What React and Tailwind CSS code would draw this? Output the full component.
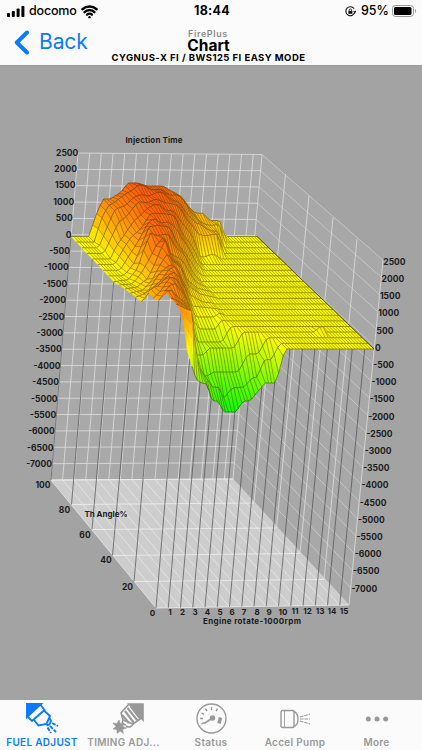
import { Wifi } from "lucide-react";

// Surface outline for every 5% of throttle, 100% first: [x, y] on the canvas.
// Anything past the last point stays at zero.
const RIDGES = [
  [[71, 236.5], [89, 236], [96, 215], [103, 199], [110, 199], [120, 193], [128, 183], [137, 183], [147, 186], [163, 186], [173, 192], [182, 197], [188, 206], [195, 213], [203, 213.3], [210, 220.5], [219.5, 220.5], [225, 236.5]],
  [[76, 242], [94, 242], [101, 221], [108, 205], [117, 201], [127, 191], [138, 187], [162, 190], [176, 195], [186, 205], [194, 215], [200, 222], [219, 226], [225, 242]],
  [[82, 248], [99, 247], [106, 229], [114, 213], [122, 208], [132, 198], [142, 194], [165, 195], [178, 202], [188, 213], [196, 225], [218, 232], [224, 248]],
  [[87, 253], [104, 253], [112, 236], [119, 221], [130, 213], [140, 203], [155, 199], [168, 202], [182, 212], [190, 222], [198, 234], [217, 236], [224, 253]],
  [[92, 259], [110, 259], [118, 243], [126, 231], [136, 219], [146, 209], [160, 206], [172, 210], [184, 224], [192, 238], [201, 258], [213, 254], [222, 259]],
  [[98, 264], [115, 264], [123, 250], [132, 238], [142, 225], [150, 214], [163, 213], [175, 219], [185, 235], [195, 252], [201, 264]],
  [[103, 270], [120, 270], [129, 256], [137, 243], [146, 228], [154, 219], [167, 221], [178, 231], [186, 246], [197, 263], [203, 270]],
  [[108.5, 275.5], [125, 275], [134, 262], [141, 246], [149, 228], [158, 225], [170, 230], [180, 244], [188, 258], [198, 272], [203, 276]],
  [[114, 281], [128, 280], [138, 268], [144, 250], [151, 232], [158, 233], [168, 236], [176, 247], [184, 256], [192, 270], [200, 281]],
  [[119, 285], [132, 284], [142, 273], [149, 260], [156, 246], [164, 238], [170, 250], [178, 256], [186, 268], [196, 282], [206, 287]],
  [[125, 289], [137, 287], [147, 278], [156, 261], [165, 242], [172, 258], [180, 265], [187, 278], [197, 288], [212, 292]],
  [[131, 293], [142, 291], [152, 280], [160, 265], [168, 251], [174, 262], [182, 272], [188, 285], [200, 294], [217, 298]],
  [[136, 297], [148, 291], [157, 279], [165, 268], [171, 263], [178, 272], [185, 283], [190, 295], [203, 302], [221, 304]],
  [[141, 302], [152, 289], [160, 280], [168, 270], [175, 269], [182, 279], [188, 297], [192, 306], [220, 309]],
  [[147, 294], [157, 287], [165, 277], [173, 272], [180, 277], [186, 290], [191, 307], [196, 317], [213, 317], [220, 313], [224, 315]],
  [[153, 298], [162, 289], [170, 280], [178, 280], [184, 290], [189, 305], [194, 322], [200, 329], [215, 329], [222, 320]],
  [[160, 298], [168, 287], [175, 283], [182, 292], [188, 305], [192, 322], [197, 342], [222, 342], [231, 326.5]],
  [[167, 293], [172, 290], [179, 295], [185, 303], [190, 315], [193, 335], [197, 355], [203, 355], [210, 348], [234, 348], [243, 332], [314, 332], [322, 325], [326, 332]],
  [[172, 298], [178, 301], [184, 305], [190, 312], [193, 340], [198, 364], [205, 377], [214, 372], [238, 372], [248, 354], [258, 354], [267, 338]],
  [[177, 304], [184, 308], [192, 311], [195, 345], [200, 372], [206, 377], [212, 387], [218, 387], [224, 398], [232, 388], [244, 387], [252, 378], [257, 377], [265, 359], [271, 360], [280, 343.4]],
  [[182, 311], [185, 330], [187, 350], [191, 363], [196, 379], [201, 383], [207, 384], [212, 401], [218, 401], [224, 412], [236, 412], [243, 401], [250, 401], [265, 383], [276, 383], [285, 349]],
];

const TILT = 0.085;
const COLS = 63;

const rowLeft = (k) => 71 + 5.35 * k;
const rowWidth = (k) => 186 + 0.5 * k;
const rowY = (k) => 236.5 + 5.625 * k;

// small steps between neighbouring cells of the map, only on the hill
function roughness(i, k, h) {
  if (k === 0 || k > 17 || h < 6) return 0;
  return (Math.sin(i * 0.9 + k * 2.3) + Math.sin(i * 0.45 - k * 1.7)) * 1.3 * Math.min(1, h / 28);
}

const surface = RIDGES.map((points, k) => {
  const base = points.map(([x, y]) => {
    const h = rowY(k) - y;
    return [x - TILT * h, h];
  });
  return Array.from({ length: COLS + 1 }, (_, i) => {
    const x = rowLeft(k) + (rowWidth(k) * i) / COLS;
    let h = 0;
    if (x <= base[0][0]) h = base[0][1];
    else {
      const j = base.findIndex((p) => p[0] >= x);
      if (j > 0) {
        const [x0, h0] = base[j - 1];
        const [x1, h1] = base[j];
        h = h0 + ((h1 - h0) * (x - x0)) / (x1 - x0 || 1);
      }
    }
    h += roughness(i, k, h);
    if (Math.abs(h) < 0.8) h = 0;
    return { x: x + TILT * h, y: rowY(k) - h, h };
  });
});

function heatColor(h) {
  if (h >= 0) {
    const t = Math.min(h / 56, 1) ** 0.88;
    return `rgb(255,${Math.round(252 - 164 * t)},${Math.round(12 * t)})`;
  }
  const t = Math.min(-h / 60, 1);
  return `rgb(${Math.round(255 - 232 * t)},252,0)`;
}

const mix = (a, b, t) => ({
  x: a.x + (b.x - a.x) * t,
  y: a.y + (b.y - a.y) * t,
  h: a.h + (b.h - a.h) * t,
});
const pts = (list) => list.map((p) => `${p.x.toFixed(1)},${p.y.toFixed(1)}`).join(" ");

function Surface() {
  const cells = [];
  for (let k = 0; k < 20; k++) {
    for (let i = COLS - 1; i >= 0; i--) {
      const a = surface[k][i];
      const b = surface[k][i + 1];
      const c = surface[k + 1][i + 1];
      const d = surface[k + 1][i];
      const parts = Math.abs(a.h - d.h) > 8 ? 4 : 1;
      for (let s = 0; s < parts; s++) {
        const quad = [mix(a, d, s / parts), mix(b, c, s / parts), mix(b, c, (s + 1) / parts), mix(a, d, (s + 1) / parts)];
        const color = heatColor(quad.reduce((sum, p) => sum + p.h, 0) / 4);
        cells.push(<polygon key={`${k}-${i}-${s}`} points={pts(quad)} fill={color} stroke={color} strokeWidth="0.4" />);
      }
      cells.push(<polyline key={`${k}-${i}-r`} points={pts([a, b])} fill="none" stroke="#2b2600" strokeWidth="0.6" strokeOpacity="0.8" />);
      if (!(k === 19 && i < 5)) {
        cells.push(<polyline key={`${k}-${i}-c`} points={pts([b, c])} fill="none" stroke="#2b2600" strokeWidth="0.55" strokeOpacity="0.65" />);
      }
    }
  }
  return (
    <g>
      {cells}
      <polyline points={pts(surface[20].slice(5))} fill="none" stroke="#2b2600" strokeWidth="0.6" strokeOpacity="0.8" />
      <polyline points={pts(surface.map((row) => row[COLS]))} fill="none" stroke="#2b2600" strokeWidth="0.7" />
    </g>
  );
}

const range = (n) => Array.from({ length: n }, (_, i) => i);
const lerp = (a, b, t) => a + (b - a) * t;

const SIDE_TOP = [[262, 154.5], [285.5, 174], [309, 196], [333, 217.5], [357, 239], [383, 260]];
const SIDE_BOTTOM = [[233, 479], [254, 503], [276.5, 528], [300, 553.5], [324, 579.5], [349, 605]];
const FLOOR_LEFT = [[51, 480], [71.5, 504.5], [92, 529.5], [112.5, 555.5], [134, 581.5], [156, 608]];

function Grid() {
  return (
    <g>
      <polygon points="78,153 262,154.5 233,479 51,480" fill="#a9a9a9" />
      <polygon points="262,154.5 383,260 349,605 233,479" fill="#a8a8a8" />
      <polygon points="51,480 233,479 349,605 156,608" fill="#cdcdcd" />
      <g stroke="#dedede" strokeWidth="0.9" strokeOpacity="0.9">
        {range(21).map((i) => {
          const t = i / 20;
          const bx = lerp(262, 233, t);
          const by = lerp(154.5, 479, t);
          return (
            <g key={i}>
              <line x1={lerp(78, 51, t)} y1={lerp(153, 480, t)} x2={bx} y2={by} />
              <line x1={bx} y1={by} x2={lerp(383, 349, t)} y2={lerp(260, 605, t)} strokeOpacity="0.6" />
            </g>
          );
        })}
        {range(16).map((i) => {
          const t = i / 15.75;
          return (
            <g key={i}>
              <line x1={78 + 184 * t} y1={153 + 1.5 * t} x2={51 + 182 * t} y2={480 - t} />
              <line x1={51 + 182 * t} y1={480 - t} x2={156 + 193 * t} y2={608 - 3 * t} stroke="#e8e8e8" />
            </g>
          );
        })}
        {SIDE_TOP.map(([x, y], i) => (
          <line key={i} x1={x} y1={y} x2={SIDE_BOTTOM[i][0]} y2={SIDE_BOTTOM[i][1]} />
        ))}
        {FLOOR_LEFT.map(([x, y], i) => (
          <line key={i} x1={x} y1={y} x2={SIDE_BOTTOM[i][0]} y2={SIDE_BOTTOM[i][1]} stroke="#f0f0f0" />
        ))}
      </g>
      <g stroke="#4a4a4a" strokeWidth="0.8" strokeOpacity="0.85">
        {FLOOR_LEFT.slice(0, 5).map(([x, y], i) => (
          <line key={i} x1={surface[i * 4][0].x} y1={surface[i * 4][0].y} x2={x} y2={y} />
        ))}
        {range(16).map((i) => {
          const top = surface[20][i * 4];
          return <line key={i} x1={top.x} y1={top.y} x2={156 + 12.25 * i} y2={608 - 0.19 * i} />;
        })}
      </g>
    </g>
  );
}

const RPM_X = [152.5, 170, 182.5, 195, 207.5, 220, 232, 244, 257, 269, 283, 295, 307.5, 320, 332, 344];
const ANGLES = [["100", 43, 485], ["80", 64.5, 509.5], ["60", 85, 534.5], ["40", 106, 560], ["20", 127.5, 586.5]];

function AxisLabels() {
  return (
    <g fill="#1c1c1c" fontSize="8.5" fontWeight="650" dominantBaseline="central">
      <text x="154" y="140" textAnchor="middle" fontSize="8" textLength="57">Injection Time</text>
      {range(20).map((i) => {
        const value = 2500 - i * 500;
        return (
          <g key={i}>
            <text x={78.3 - 1.38 * i} y={152.5 + 16.4 * i} textAnchor="end">{value}</text>
            <text x={383.3 - 1.68 * i} y={261.8 + 17.2 * i}>{value}</text>
          </g>
        );
      })}
      {ANGLES.map(([label, x, y]) => (
        <text key={label} x={x} y={y} textAnchor="middle">{label}</text>
      ))}
      {RPM_X.map((x, i) => (
        <text key={i} x={x} y={612.5 - i * 0.1} fontSize="8" textAnchor="middle">{i}</text>
      ))}
      <text x="84.5" y="514" fontSize="8" textLength="43">Th Angle%</text>
      <text x="203" y="620.7" fontSize="8" textLength="98">Engine rotate-1000rpm</text>
    </g>
  );
}

function StatusBar() {
  return (
    <div className="grid h-[22px] grid-cols-3 items-center pl-[7px] pr-[5px] text-black">
      <div className="flex items-center">
        <svg width="18" height="11" viewBox="0 0 18 11">
          <rect x="0" y="7" width="3" height="4" rx="0.8" />
          <rect x="4.8" y="5" width="3" height="6" rx="0.8" />
          <rect x="9.6" y="2.5" width="3" height="8.5" rx="0.8" />
          <rect x="14.4" y="0" width="3" height="11" rx="0.8" />
        </svg>
        <span className="ml-1 text-[12.5px] font-medium tracking-[-0.2px]">docomo</span>
        <Wifi className="ml-[4px] h-[17px] w-[17px]" strokeWidth={3.4} />
      </div>
      <div className="text-center text-[12.5px] font-bold tracking-[0.3px]">18:44</div>
      <div className="flex items-center justify-end">
        <svg width="11" height="11" viewBox="0 0 11 11" fill="none" stroke="#111" strokeWidth="1.1">
          <path d="M9.1 2.6A4.5 4.5 0 1 0 9.8 6.2M8.6 5.2l1.3 1.3 1-1.6" />
          <rect x="3.4" y="5" width="4" height="2.8" fill="#111" stroke="none" />
          <path d="M4.2 5V4.2a1.2 1.2 0 0 1 2.4 0V5" strokeWidth="0.9" />
        </svg>
        <span className="ml-[5px] text-[12.5px] font-medium">95%</span>
        <svg className="ml-[3px]" width="25" height="12" viewBox="0 0 25 12">
          <rect x="0.5" y="0.5" width="21" height="11" rx="3" fill="none" stroke="#999" />
          <rect x="2" y="2" width="17.5" height="8" rx="1.6" />
          <path d="M23 4v4c1.6-.6 1.6-3.4 0-4z" fill="#999" />
        </svg>
      </div>
    </div>
  );
}

function NavBar() {
  return (
    <div className="grid h-[43px] grid-cols-[110px_1fr_110px]">
      <div className="flex items-center pb-[3px] pl-[14px] text-[#0a7aff]">
        <svg width="16" height="25" viewBox="0 0 16 25" fill="none" stroke="currentColor" strokeWidth="4" strokeLinecap="round" strokeLinejoin="round">
          <path d="M13 2.5 2.8 12.5 13 22.5" />
        </svg>
        <span className="ml-[9px] text-[21px] tracking-[-0.1px]">Back</span>
      </div>
      <div className="flex flex-col items-center whitespace-nowrap pt-[6px] text-black">
        <span className="mr-[6px] text-[9px] font-semibold leading-[11px] tracking-[0.6px] text-[#8b8b8e]">FirePlus</span>
        <span className="mr-[5px] text-[15.5px] font-bold leading-[13px]">Chart</span>
        <span className="mr-[5px] text-[9.5px] font-bold leading-[12px] tracking-[0.45px]">CYGNUS-X FI / BWS125 FI EASY MODE</span>
      </div>
    </div>
  );
}

function InjectorIcon() {
  return (
    <svg width="33" height="32" viewBox="0 0 33 32" fill="none" stroke="currentColor" strokeWidth="1.9">
      <path d="M1 1h14L1 14z" fill="currentColor" />
      <path d="M1 13 6 18 18.5 7 14 1M8 17l4.500 5.500 8-1.500 3.500-8-5.500-5" />
      <path d="M20.5 22.5l3-1.2 1.5-3.4-1.5-2.7" />
      <path d="M26 20l6 3M24 23l6 6M21.500 24.500l3.500 5.500" strokeDasharray="4 1.200" />
    </svg>
  );
}

function SparkPlugIcon() {
  return (
    <svg className="ml-[9px]" width="32" height="32" viewBox="0 0 32 32" fill="none" stroke="currentColor" strokeWidth="1.6">
      <path d="M17 1h14v16L20 4z" fill="currentColor" />
      <path d="M17 1 9 10l2 7 10 4 10-7" />
      <path d="M13 8l9 12M15.500 5l10 12.500M18.500 3l9.500 12.500M10 12l7 8" strokeWidth="2.100" />
      <path d="M11 17c-2 4 1 5 3 4.500M21 21c-1 3-4 4-7 2" />
      <path d="M1 20l4 .5L7 17l1.500 4 3.500-1-1.500 3.500 4 1.500-4 1.500 1 4-3.500-2.500-3 2.500v-4l-4-.5L4 23.500z" fill="currentColor" strokeWidth="0.600" />
    </svg>
  );
}

function GaugeIcon() {
  return (
    <svg width="31" height="31" viewBox="0 0 31 31" fill="none" stroke="currentColor" strokeWidth="1.4">
      <circle cx="15.5" cy="15.5" r="14.5" />
      <path d="M15.5 4v3M9.5 5.700l1.400 2.500M5.500 10l2.500 1.400M4 15.500h3M21.500 5.700l-1.400 2.500M5.500 21l2.500-1.400" />
      <path d="M24.500 14.500l-1.500 6" strokeWidth="3.5" />
      <path d="M8 20.500l8-5" strokeWidth="1.7" />
      <circle cx="16.5" cy="15" r="2" fill="currentColor" />
    </svg>
  );
}

function PumpIcon() {
  return (
    <svg width="31" height="20" viewBox="0 0 31 20" fill="none" stroke="currentColor" strokeWidth="1.4">
      <rect x="1" y="1.5" width="13" height="17" rx="1.5" />
      <path d="M4.500 2v16" strokeWidth="0.9" />
      <path d="M14 2.500c2.500 1 4 4 4 7.500s-1.500 6.500-4 7.500" />
      <path d="M20 8l10-3M20 10h10M20 12l10 3" strokeWidth="1.1" strokeDasharray="3.5 1" />
    </svg>
  );
}

function MoreIcon() {
  return (
    <svg width="24" height="6" viewBox="0 0 24 6" fill="currentColor">
      <circle cx="3.3" cy="3" r="2.5" />
      <circle cx="12" cy="3" r="2.5" />
      <circle cx="20.7" cy="3" r="2.5" />
    </svg>
  );
}

const TABS = [
  { label: "FUEL ADJUST", icon: InjectorIcon, active: true },
  { label: "TIMING ADJ...", icon: SparkPlugIcon },
  { label: "Status", icon: GaugeIcon },
  { label: "Accel Pump", icon: PumpIcon },
  { label: "More", icon: MoreIcon },
];

function TabBar() {
  return (
    <nav className="grid h-[50px] grid-cols-[84px_79px_96px_72px_1fr] bg-[#fbfbfb]">
      {TABS.map(({ label, icon: Icon, active }) => (
        <div
          key={label}
          className={`flex flex-col items-center whitespace-nowrap ${active ? "text-[#0a7aff]" : "text-[#999999]"}`}
        >
          <div className="flex h-[37px] items-center">
            <Icon />
          </div>
          <span className="text-[10px] font-semibold leading-[11px] tracking-[0.3px]">{label}</span>
        </div>
      ))}
    </nav>
  );
}

export default function App() {
  return (
    <div className="flex h-[750px] w-[422px] flex-col overflow-hidden bg-[#a3a3a3] font-['Inter',sans-serif]">
      <header className="h-[65px] bg-[#fbfbfb]">
        <StatusBar />
        <NavBar />
      </header>
      <main className="h-[635px] border-t border-[#999999]">
        <svg className="block" width="422" height="634" viewBox="0 66 422 634">
          <Grid />
          <Surface />
          <AxisLabels />
        </svg>
      </main>
      <TabBar />
    </div>
  );
}
